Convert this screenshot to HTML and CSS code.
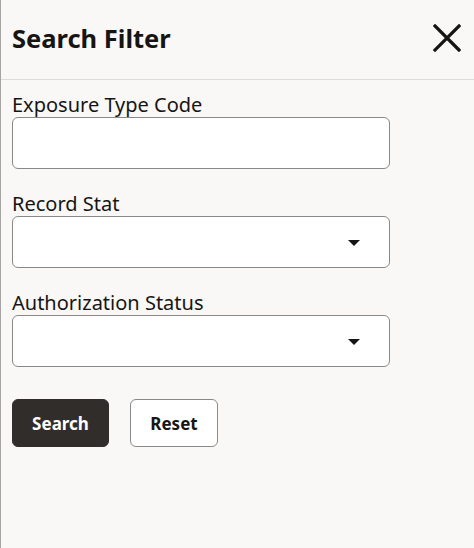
FILE: index.html
```html
<!DOCTYPE html>
<html>
<head>
<meta charset="utf-8">
<link rel="stylesheet" href="styles.css">
</head>
<body>
<div class="panel">
  <header class="header">
    <h1 class="title">Search Filter</h1>
    <button class="close" aria-label="Close">
      <svg width="28" height="28" viewBox="0 0 28 28"><path d="M2 2 L26 26 M26 2 L2 26" stroke="#161513" stroke-width="3.2" stroke-linecap="square" fill="none"/></svg>
    </button>
  </header>
  <div class="body">
    <div class="field">
      <label class="label">Exposure Type Code</label>
      <div class="input"></div>
    </div>
    <div class="field">
      <label class="label">Record Stat</label>
      <div class="input select"><span class="caret"></span></div>
    </div>
    <div class="field">
      <label class="label">Authorization Status</label>
      <div class="input select"><span class="caret"></span></div>
    </div>
    <div class="actions">
      <button class="btn primary">Search</button>
      <button class="btn secondary">Reset</button>
    </div>
  </div>
</div>
</body>
</html>
```

FILE: styles.css
```css
html, body {
  margin: 0;
  padding: 0;
  height: 100%;
}
body {
  background: #f9f8f6;
  font-family: "Noto Sans", "Open Sans", sans-serif;
  color: #161513;
}
.panel {
  height: 100%;
  box-sizing: border-box;
  border-left: 1px solid #a5a4a2;
}
.header {
  height: 79px;
  border-bottom: 1px solid #dedcda;
  display: flex;
  align-items: center;
  justify-content: space-between;
  padding: 0 13px 0 11px;
}
.title {
  margin: 0;
  font-size: 25.5px;
  font-weight: 700;
  line-height: 1;
  margin-top: -2px;
}
.close {
  border: 0;
  background: none;
  padding: 0;
  width: 28px;
  height: 28px;
  display: flex;
  margin-top: -4px;
}
.body {
  padding: 13px 0 0 11px;
}
.field {
  margin-bottom: 23px;
}
.label {
  display: block;
  font-size: 20px;
  line-height: 24px;
  height: 24px;
  color: #161513;
}
.input {
  width: 378px;
  height: 52px;
  box-sizing: border-box;
  border: 1px solid #8b8987;
  border-radius: 6px;
  background: #fff;
  position: relative;
  display: flex;
  align-items: center;
  justify-content: flex-end;
  padding-right: 29px;
}
.caret {
  width: 0;
  height: 0;
  border-left: 6px solid transparent;
  border-right: 6px solid transparent;
  border-top: 6px solid #161513;
  margin-top: 1px;
}
.actions {
  display: flex;
  gap: 21px;
  padding-top: 9px;
}
.btn {
  height: 48px;
  border-radius: 6px;
  font-family: "Noto Sans", "Open Sans", sans-serif;
  font-size: 17px;
  font-weight: 700;
  padding: 0 19px;
  box-sizing: border-box;
}
.primary {
  background: #312d2a;
  color: #fff;
  border: 1px solid #312d2a;
  width: 97px;
}
.secondary {
  background: #fff;
  color: #161513;
  border: 1px solid #8b8987;
  width: 88px;
}
```
